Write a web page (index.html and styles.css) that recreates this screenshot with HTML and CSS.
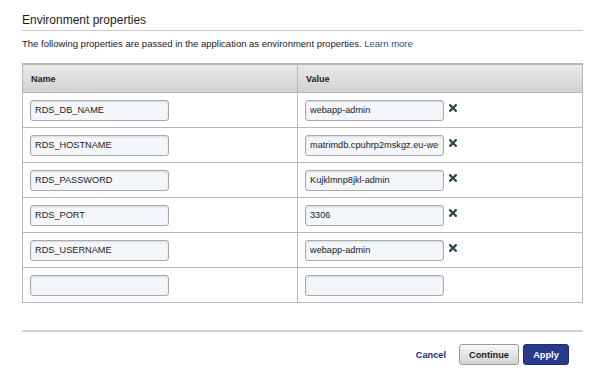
FILE: index.html
```html
<!DOCTYPE html>
<html lang="en">
<head>
    <meta charset="UTF-8">
    <title>Environment properties</title>
    <link rel="stylesheet" href="styles.css">
</head>
<body>
    <div class="panel">
        <h2 class="panel-title">Environment properties</h2>
        <p class="intro">The following properties are passed in the application as environment properties. <a href="#" class="link">Learn more</a></p>

        <table class="props">
            <thead>
                <tr>
                    <th class="col-name">Name</th>
                    <th class="col-value">Value</th>
                </tr>
            </thead>
            <tbody>
                <tr>
                    <td><input class="field" type="text" value="RDS_DB_NAME"></td>
                    <td><div class="value-cell"><input class="field" type="text" value="webapp-admin"><svg class="remove" viewBox="0 0 8 8"><path d="M1.2 1.2 L6.8 6.8 M6.8 1.2 L1.2 6.8"/></svg></div></td>
                </tr>
                <tr>
                    <td><input class="field" type="text" value="RDS_HOSTNAME"></td>
                    <td><div class="value-cell"><input class="field" type="text" value="matrimdb.cpuhrp2mskgz.eu-west-1.rds.amazonaws.com"><svg class="remove" viewBox="0 0 8 8"><path d="M1.2 1.2 L6.8 6.8 M6.8 1.2 L1.2 6.8"/></svg></div></td>
                </tr>
                <tr>
                    <td><input class="field" type="text" value="RDS_PASSWORD"></td>
                    <td><div class="value-cell"><input class="field" type="text" value="Kujklmnp8jkl-admin"><svg class="remove" viewBox="0 0 8 8"><path d="M1.2 1.2 L6.8 6.8 M6.8 1.2 L1.2 6.8"/></svg></div></td>
                </tr>
                <tr>
                    <td><input class="field" type="text" value="RDS_PORT"></td>
                    <td><div class="value-cell"><input class="field" type="text" value="3306"><svg class="remove" viewBox="0 0 8 8"><path d="M1.2 1.2 L6.8 6.8 M6.8 1.2 L1.2 6.8"/></svg></div></td>
                </tr>
                <tr>
                    <td><input class="field" type="text" value="RDS_USERNAME"></td>
                    <td><div class="value-cell"><input class="field" type="text" value="webapp-admin"><svg class="remove" viewBox="0 0 8 8"><path d="M1.2 1.2 L6.8 6.8 M6.8 1.2 L1.2 6.8"/></svg></div></td>
                </tr>
                <tr>
                    <td><input class="field" type="text" value=""></td>
                    <td><div class="value-cell"><input class="field" type="text" value=""></div></td>
                </tr>
            </tbody>
        </table>

        <div class="actions">
            <a href="#" class="cancel">Cancel</a>
            <button class="btn btn-continue">Continue</button>
            <button class="btn btn-apply">Apply</button>
        </div>
    </div>
</body>
</html>
```

FILE: styles.css
```css
body {
    margin: 0;
    background: #ffffff;
    font-family: 'Liberation Sans', Arial, sans-serif;
    color: #222222;
}

.panel {
    width: 561px;
    margin-left: 22px;
    padding-top: 13px;
}

.panel-title {
    margin: 0;
    font-size: 12px;
    font-weight: normal;
    line-height: 14px;
    padding-bottom: 3px;
    border-bottom: 1px solid #c9c9c9;
    color: #1e1e1e;
}

.intro {
    margin: 7px 0 0 0;
    font-size: 9.5px;
    line-height: 11px;
}

.link {
    color: #1d4f96;
    text-decoration: none;
}

/* tableau des propriétés */
.props {
    margin-top: 14px;
    width: 561px;
    border-collapse: collapse;
    table-layout: fixed;
    border: 1px solid #b7b7b7;
}

.props th {
    height: 27px;
    padding: 0 0 0 8px;
    text-align: left;
    font-size: 9px;
    font-weight: bold;
    color: #1e1e1e;
    background: linear-gradient(#e9e9e9 0%, #d2d2d2 100%);
    border: 1px solid #b7b7b7;
    border-top-width: 2px;
}

.col-name {
    width: 266px;
}

.props td {
    height: 34px;
    padding: 0 0 0 7px;
    border: 1px solid #b7b7b7;
    vertical-align: middle;
}

.value-cell {
    display: flex;
    align-items: center;
}

.field {
    box-sizing: border-box;
    width: 139px;
    height: 21px;
    padding: 0 4px;
    border: 1px solid #a9a9a9;
    border-radius: 3px;
    background: #f3f7fb;
    box-shadow: inset 0 1px 2px rgba(0, 0, 0, 0.12);
    font-family: 'Liberation Sans', Arial, sans-serif;
    font-size: 9.2px;
    color: #222222;
}

.remove {
    width: 8px;
    height: 8px;
    margin-left: 5px;
    margin-top: -4px;
    stroke: #2b4a50;
    stroke-width: 2.3;
    stroke-linecap: square;
}

/* pied avec les boutons */
.actions {
    margin-top: 27px;
    border-top: 2px solid #d2d2d2;
    padding-top: 12px;
    display: flex;
    justify-content: flex-end;
    align-items: center;
    padding-right: 14px;
}

.cancel {
    color: #1f2f7e;
    font-weight: bold;
    font-size: 9.2px;
    text-decoration: none;
    margin-right: 13px;
}

.btn {
    height: 21px;
    border-radius: 3px;
    font-family: 'Liberation Sans', Arial, sans-serif;
    font-weight: bold;
    font-size: 9.2px;
    padding: 0;
}

.btn-continue {
    width: 60px;
    background: linear-gradient(#f7f7f7 0%, #d3d3d3 100%);
    border: 1px solid #9a9a9a;
    color: #1e1e1e;
    margin-right: 4px;
}

.btn-apply {
    width: 46px;
    background: #283a8e;
    border: 1px solid #1e2c70;
    color: #ffffff;
}
```
